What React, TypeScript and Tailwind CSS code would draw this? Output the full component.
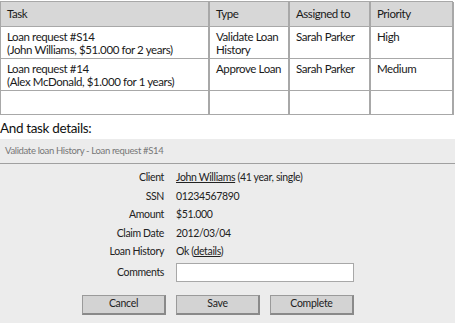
import React from "react";

const font = { fontFamily: "Lato, 'Open Sans', sans-serif" };

function Cell({ children, header, h }: { children?: React.ReactNode; header?: boolean; h: string }) {
  return (
    <div
      className={`border-r-2 border-b border-[#a8a8a8] px-[6px] ${h} ${header ? "bg-[#d7d7d7] flex items-center tracking-[-0.45px]" : "bg-white pt-[4px] tracking-[-0.4px]"} text-[11.5px] leading-[12.5px] text-[#1a1a1a]`}
    >
      {children}
    </div>
  );
}

function Row({ label, children }: { label: string; children: React.ReactNode }) {
  return (
    <div className="flex items-center h-[18.5px] text-[10.5px] tracking-[-0.35px] text-[#222]">
      <div className="w-[164px] text-right">{label}</div>
      <div className="pl-[12px]">{children}</div>
    </div>
  );
}

function Btn({ children }: { children: React.ReactNode }) {
  return (
    <button className="h-[20px] w-[84px] bg-[#d3d3d3] border border-[#9a9a9a] border-r-2 border-b-2 border-r-[#8a8a8a] border-b-[#8a8a8a] text-[10.5px] tracking-[-0.3px] text-[#222] flex items-center justify-center">
      {children}
    </button>
  );
}

export default function App() {
  return (
    <div className="w-[456px] h-[323px] bg-white overflow-hidden" style={font}>
      <div className="pt-[1px]">
        <div className="grid grid-cols-[209px_80px_81px_83px] border-l border-t border-[#a8a8a8] w-[453px]">
          <Cell header h="h-[25px]">Task</Cell>
          <Cell header h="h-[25px]">Type</Cell>
          <Cell header h="h-[25px]">Assigned to</Cell>
          <Cell header h="h-[25px]">Priority</Cell>

          <Cell h="h-[32px]">
            Loan request #S14
            <br />
            (John Williams, $51.000 for 2 years)
          </Cell>
          <Cell h="h-[32px]">
            Validate Loan
            <br />
            History
          </Cell>
          <Cell h="h-[32px]">Sarah Parker</Cell>
          <Cell h="h-[32px]">High</Cell>

          <Cell h="h-[32px]">
            Loan request #14
            <br />
            (Alex McDonald, $1.000 for 1 years)
          </Cell>
          <Cell h="h-[32px]">Approve Loan</Cell>
          <Cell h="h-[32px]">Sarah Parker</Cell>
          <Cell h="h-[32px]">Medium</Cell>

          <Cell h="h-[24px]" />
          <Cell h="h-[24px]" />
          <Cell h="h-[24px]" />
          <Cell h="h-[24px]" />
        </div>
      </div>

      <div className="h-[24px] flex items-center text-[13.5px] tracking-[-0.35px] text-[#111] pt-[2px]">And task details:</div>

      <div className="bg-[#ececec] w-[455px] h-[184px]">
        <div className="h-[25px] flex items-center pl-[5px] text-[9.5px] tracking-[-0.35px] text-[#777] border-b border-[#a0a0a0]">
          Validate loan History - Loan request #S14
        </div>
        <div className="pt-[5px]">
          <Row label="Client">
            <span className="underline">John Williams</span> (41 year, single)
          </Row>
          <Row label="SSN">01234567890</Row>
          <Row label="Amount">$51.000</Row>
          <Row label="Claim Date">2012/03/04</Row>
          <Row label="Loan History">
            Ok (<span className="underline">details</span>)
          </Row>
          <div className="flex items-center h-[20px] mt-[1px] text-[10.5px] tracking-[-0.35px] text-[#222]">
            <div className="w-[164px] text-right">Comments</div>
            <div className="pl-[12px]">
              <div className="w-[178px] h-[19px] bg-white border border-[#a8a8a8]" />
            </div>
          </div>
          <div className="flex gap-[10px] pl-[82px] mt-[12px]">
            <Btn>Cancel</Btn>
            <Btn>Save</Btn>
            <Btn>Complete</Btn>
          </div>
        </div>
      </div>
    </div>
  );
}
